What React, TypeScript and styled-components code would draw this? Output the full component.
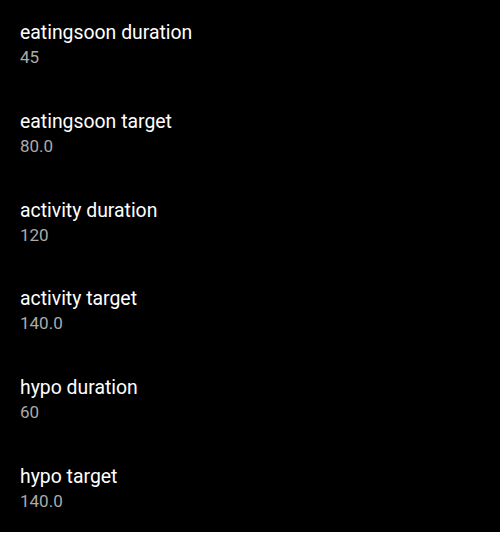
import React from "react";
import styled, { createGlobalStyle } from "styled-components";

const Global = createGlobalStyle`
  html, body { margin: 0; padding: 0; background: #ffffff; }
`;

const List = styled.div`
  background: #000000;
  display: flex;
  flex-direction: column;
  font-family: Roboto, "Noto Sans", sans-serif;
`;

const Row = styled.div`
  height: 88.7px;
  box-sizing: border-box;
  padding: 21.2px 20px 0 20px;
  display: flex;
  flex-direction: column;
  gap: 2px;
`;

const Title = styled.div`
  color: #ffffff;
  font-size: 19.4px;
  line-height: 24px;
`;

const Summary = styled.div`
  color: #ababab;
  font-size: 17px;
  line-height: 20px;
`;

const items = [
  ["eatingsoon duration", "45"],
  ["eatingsoon target", "80.0"],
  ["activity duration", "120"],
  ["activity target", "140.0"],
  ["hypo duration", "60"],
  ["hypo target", "140.0"],
];

export default function App() {
  return (
    <>
      <Global />
      <List>
        {items.map(([t, s]) => (
          <Row key={t}>
            <Title>{t}</Title>
            <Summary>{s}</Summary>
          </Row>
        ))}
      </List>
    </>
  );
}
